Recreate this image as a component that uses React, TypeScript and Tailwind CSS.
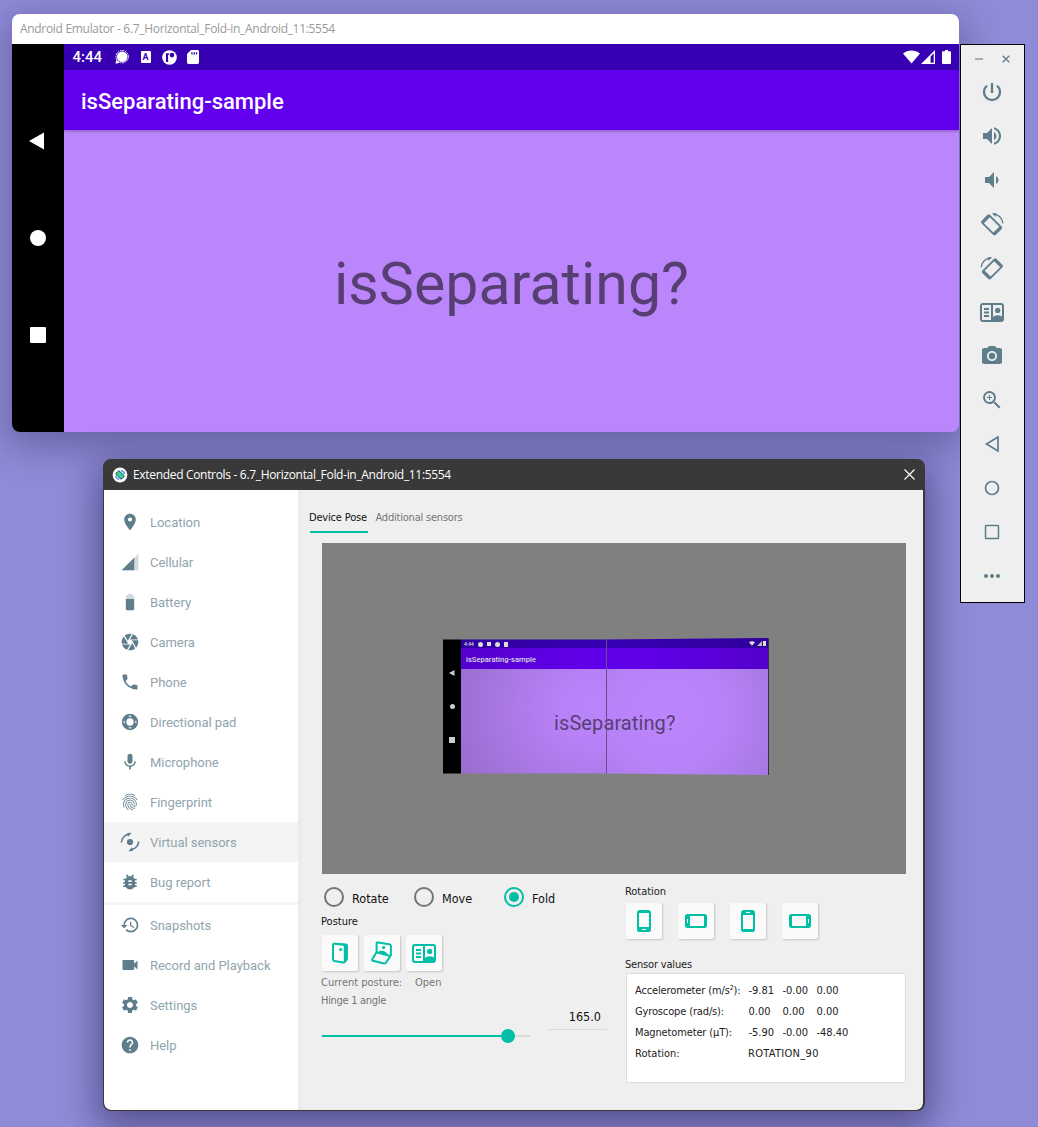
import React from 'react';
import type { ReactNode } from 'react';
import {
  MdLocationOn, MdCamera, MdPhone, MdMic, MdFingerprint, MdBugReport, MdHistory, MdVideocam,
  MdSettings, MdHelp, MdVolumeUp, MdVolumeDown, MdCameraAlt, MdZoomIn, MdMoreHoriz,
} from 'react-icons/md';

function Cellular() {
  return (
    <svg viewBox="0 0 24 24" width="20" height="20" fill="currentColor">
      <path d="M2 22h20V2z" opacity=".3" />
      <path d="M17 7L2 22h15z" />
    </svg>
  );
}

function BatteryIcon() {
  return (
    <svg viewBox="0 0 24 24" width="20" height="20" fill="currentColor">
      <path d="M17 5.33C17 4.6 16.4 4 15.67 4H14V2h-4v2H8.33C7.6 4 7 4.6 7 5.33V9h10z" opacity=".3" />
      <path d="M7 8.5v12.17C7 21.4 7.6 22 8.33 22h7.33c.74 0 1.34-.6 1.34-1.33V8.5z" />
    </svg>
  );
}

function DPad() {
  return (
    <svg viewBox="0 0 24 24" width="20" height="20" fill="currentColor">
      <circle cx="12" cy="12" r="9.8" />
      <circle cx="12" cy="12" r="4.400" fill="#fff" />
      <path d="M12 3.600l1.900 2h-3.800zM12 20.400l1.900-2h-3.800zM3.600 12l2-1.900v3.800zM20.400 12l-2-1.900v3.800z" fill="#fff" />
    </svg>
  );
}

function SensorsIcon() {
  return (
    <svg viewBox="0 0 24 24" width="22" height="22" className="-ml-px" fill="none" stroke="currentColor" strokeWidth="1.9">
      <circle cx="12" cy="12" r="3.4" fill="currentColor" stroke="none" />
      <path d="M2.600 12.600A9.600 9.600 0 0 1 10.500 3.700" />
      <path d="M8.800 2.200l4.900-.2-3.800 4.200z" fill="currentColor" stroke="none" />
      <path d="M21.400 11.400A9.600 9.600 0 0 1 13.500 20.300" />
      <path d="M15.200 21.800l-4.900.2 3.800-4.200z" fill="currentColor" stroke="none" />
    </svg>
  );
}

function Power() {
  return (
    <svg viewBox="0 0 24 24" width="24" height="24" fill="none" stroke="currentColor" strokeWidth="2.300">
      <path d="M12 3v10M7.100 5.700a8 8 0 1 0 9.800 0" />
    </svg>
  );
}

function RotateDevice({ flip }: { flip?: boolean }) {
  return (
    <svg viewBox="0 0 24 24" width="24" height="24" className={flip ? '-scale-x-100' : ''} fill="currentColor">
      <path
        fillRule="evenodd"
        transform="rotate(45 11.600 12.900)"
        d="M3.600 6.900h16q2 0 2 2v8q0 2-2 2h-16q-2 0-2-2v-8q0-2 2-2zM4.900 8.700v8.400h13.400V8.700z"
      />
      <path d="M13 1.900A10.200 10.200 0 0 1 22.900 11.400" fill="none" stroke="currentColor" strokeWidth="1.400" />
      <path d="M11.800 1.200h4.200l-.2 3.800z" />
    </svg>
  );
}

function BookFold() {
  return (
    <svg viewBox="0 0 24 19" width="24" height="19" fill="currentColor">
      <rect x="1" y="1" width="22" height="17" rx="2" fill="none" stroke="currentColor" strokeWidth="2" />
      <path d="M11 1h2v17h-2zM4 5h5v2H4zM4 8.500h5v2H4zM4 12h5v2H4z" />
      <circle cx="17.700" cy="7.400" r="2.600" />
      <path d="M12.500 18v-3.500c2.200-3 8.200-3 10.300 0V18z" />
    </svg>
  );
}

function ClosedFold() {
  return (
    <svg viewBox="0 0 16 22" width="16" height="22" fill="none" stroke="currentColor" strokeWidth="2" strokeLinejoin="round">
      <path d="M1 3.200q0-1.700 1.700-1.500l8.600 1.100q1.500.3 1.500 1.700v14.300q0 1.900-1.700 1.600l-8.600-1.400q-1.500-.3-1.500-1.700z" />
      <path d="M3 .7l11 .8q2 .2 2 2.200v12.800q0 1.200-.8 2l-2.400 2.700V4.200l-2-1.200z" fill="currentColor" stroke="none" />
      <circle cx="8.600" cy="7.600" r="1.500" fill="currentColor" stroke="none" />
    </svg>
  );
}

function HalfFold() {
  return (
    <svg viewBox="0 0 22 24" width="22" height="24" fill="none" stroke="currentColor" strokeWidth="2" strokeLinejoin="round">
      <path d="M5.600 11V2.500q0-1.200 1.300-1l11.300 1.700q1.700.3 1.700 1.800v9.300L14.800 21.900q-.7.900-1.800.6L2 19.800q-1.300-.4-.7-1.500z" />
      <path d="M5.400 11.200L20 15.300" />
      <circle cx="12.600" cy="6.600" r="1.600" fill="currentColor" stroke="none" />
      <path d="M6.500 11.300c2.500-2.800 9-2 11 3.200z" fill="currentColor" stroke="none" />
    </svg>
  );
}

function PhoneShape({ turn }: { turn: string }) {
  return (
    <svg viewBox="0 0 22 22" width="22" height="22" className={turn} fill="currentColor">
      <path
        fillRule="evenodd"
        d="M6.300 0h9.400q2.300 0 2.300 2.500v17q0 2.500-2.300 2.500H6.300q-2.300 0-2.300-2.500v-17Q4 0 6.300 0zM6 3v14h10V3zM9 19v1h4V19z"
      />
    </svg>
  );
}

function Wifi() {
  return (
    <svg viewBox="0 0 17 14" width="17" height="14" fill="#fff">
      <path d="M0 3.600C4.900-.5 12.100-.5 17 3.600L8.500 13.500z" />
    </svg>
  );
}
function Signal() {
  return (
    <svg viewBox="0 0 14 14" width="14" height="14" fill="#fff">
      <path fillRule="evenodd" d="M14 0v14H0zM12.700 3.200L9.600 6.500v6.200h3.100z" />
    </svg>
  );
}
function BatteryFull() {
  return (
    <svg viewBox="0 0 9 14" width="9" height="14" fill="#fff">
      <path d="M3 0h3v1.200h2q1 0 1 1V13q0 1-1 1H1q-1 0-1-1V2.200q0-1 1-1h2z" />
    </svg>
  );
}
function ChatDot() {
  return (
    <svg viewBox="0 0 14 14" width="14" height="14">
      <circle cx="7.200" cy="6.700" r="6.200" fill="none" stroke="#fff" strokeWidth="1" strokeDasharray="1.800 .8" />
      <circle cx="7.200" cy="6.700" r="5.300" fill="#fff" />
      <path d="M.5 13.700l.8-4 3.500 3z" fill="#fff" />
    </svg>
  );
}
function CircleR() {
  return (
    <svg viewBox="0 0 15 15" width="15" height="15">
      <circle cx="7.500" cy="7.500" r="7.300" fill="#fff" />
      <path d="M4 3.200h3v1.500h-.9v7.400H4z" fill="#3700b3" />
      <circle cx="9.900" cy="5.100" r="2.300" fill="#3700b3" />
    </svg>
  );
}
function SdCard() {
  return (
    <svg viewBox="0 0 12 14" width="12" height="14">
      <path d="M4 0h6.500Q12 0 12 1.400v11.200q0 1.400-1.500 1.400h-9Q0 14 0 12.600V4z" fill="#fff" />
      <path d="M4.300 2.200h1.300v2.200H4.300zM6.600 2.200h1.300v2.200H6.600zM8.900 2.200h1.300v2.200H8.900z" fill="#3700b3" />
    </svg>
  );
}

function EmulatorWindow() {
  return (
    <section className="absolute left-3 top-3.5 flex h-[418px] w-[947px] flex-col overflow-hidden rounded-lg shadow-[0_10px_36px_4px_rgba(20,15,50,0.32)]">
      <header className="flex h-[30px] items-center bg-white pl-2 font-['Open_Sans',sans-serif] text-[12px] tracking-[-0.31px] text-[#999]">
        <span>Android Emulator - 6.7_Horizontal_Fold-in_Android_11:5554</span>
      </header>
      <div className="flex flex-1">
        <nav className="flex w-[52px] flex-col items-center justify-center bg-black">
          <span className="flex h-[97px] items-center">
            <svg viewBox="0 0 18 18" width="18" height="18" fill="#fff"><path d="M15 0.500v17L0 9z" /></svg>
          </span>
          <span className="flex h-[97px] items-center"><i className="size-[15.500px] rounded-full bg-white" /></span>
          <span className="flex h-[97px] items-center"><i className="size-4 rounded-[1px] bg-white" /></span>
        </nav>
        <div className="flex flex-1 flex-col font-['Roboto',sans-serif]">
          <div className="flex h-[26px] items-center bg-[#3700b3] pl-[8.500px] pr-2 text-[15px] font-medium text-white">
            <span className="w-[42px] pt-px">4:44</span>
            <ChatDot />
            <span className="ml-3 flex h-3 w-2.5 items-center justify-center rounded-[1px] bg-white text-[9px] font-bold leading-none text-[#3700b3]">A</span>
            <span className="ml-[11px]"><CircleR /></span>
            <span className="ml-[10.500px]"><SdCard /></span>
            <span className="ml-auto flex items-center">
              <Wifi />
              <span className="ml-px"><Signal /></span>
              <span className="ml-[7px]"><BatteryFull /></span>
            </span>
          </div>
          <div className="z-10 flex h-[60px] items-center bg-[#6200ee] pl-[17px] pt-[2px] text-[22px] font-medium text-white shadow-[0_1px_3px_rgba(0,0,0,0.3)]">
            isSeparating-sample
          </div>
          <div className="flex flex-1 items-center justify-center bg-[#bb86fc] pt-[5px] text-[59px] leading-none tracking-[0.040px] text-[#573f74]">
            isSeparating?
          </div>
        </div>
      </div>
    </section>
  );
}

function Toolbar() {
  const tools: ReactNode[] = [
    <Power />,
    <MdVolumeUp size={24} />,
    <MdVolumeDown size={24} />,
    <RotateDevice />,
    <RotateDevice flip />,
    <BookFold />,
    <MdCameraAlt size={24} />,
    <MdZoomIn size={24} />,
    <svg viewBox="0 0 24 24" width="24" height="24" fill="none" stroke="currentColor" strokeWidth="1.700"><path d="M18 5v14L6.500 12z" /></svg>,
    <svg viewBox="0 0 24 24" width="24" height="24" fill="none" stroke="currentColor" strokeWidth="1.700"><circle cx="12" cy="12" r="6.500" /></svg>,
    <svg viewBox="0 0 24 24" width="24" height="24" fill="none" stroke="currentColor" strokeWidth="1.500"><rect x="5.500" y="5.500" width="13" height="13" rx=".8" /></svg>,
    <MdMoreHoriz size={24} />,
  ];
  return (
    <aside className="absolute left-[960px] top-11 h-[559px] w-[65px] border border-black bg-[#efefef] text-[#607d8b]">
      <div className="flex h-[25px] items-center gap-[19px] pl-[14px] pt-0.5">
        <i className="h-0.5 w-2 bg-[#9fb0b8]" />
        <svg viewBox="0 0 8 8" width="8" height="8" stroke="currentColor" strokeWidth="1.300"><path d="M.7.7l6.600 6.600M7.300.7L.7 7.300" /></svg>
      </div>
      <div className="flex flex-col">
        {tools.map((t, i) => <span key={i} className="flex h-11 w-[62px] items-center justify-center">{t}</span>)}
      </div>
    </aside>
  );
}

function Sidebar() {
  const top: [string, ReactNode][] = [
    ['Location', <MdLocationOn size={20} />],
    ['Cellular', <Cellular />],
    ['Battery', <BatteryIcon />],
    ['Camera', <MdCamera size={20} />],
    ['Phone', <MdPhone size={20} />],
    ['Directional pad', <DPad />],
    ['Microphone', <MdMic size={20} />],
    ['Fingerprint', <MdFingerprint size={20} />],
    ['Virtual sensors', <SensorsIcon />],
    ['Bug report', <MdBugReport size={20} />],
  ];
  const bottom: [string, ReactNode][] = [
    ['Snapshots', <MdHistory size={20} />],
    ['Record and Playback', <MdVideocam size={20} />],
    ['Settings', <MdSettings size={20} />],
    ['Help', <MdHelp size={20} />],
  ];
  const item = ([label, icon]: [string, ReactNode]) => (
    <li key={label} className={`flex h-10 items-center pl-4 text-[#607d8b] ${label === 'Virtual sensors' ? 'bg-[#f4f4f4]' : ''}`}>
      <span className="flex w-[30px]">{icon}</span>
      <span className="pt-px text-[13px] tracking-[-0.03px] text-[#90a4ae]">{label}</span>
    </li>
  );
  return (
    <nav className="w-[194px] bg-white pt-3 font-['Roboto',sans-serif]">
      <ul>{top.map(item)}</ul>
      <div className="h-[3px] bg-[#f4f4f4]" />
      <ul>{bottom.map(item)}</ul>
    </nav>
  );
}

function PosePreview() {
  return (
    <div className="relative flex h-[138px] w-[326px] font-['Roboto',sans-serif] [clip-path:polygon(0_2.500px,50%_2.500px,100%_1px,100%_138px,50%_136.500px,0_136.500px)]">
      <div className="flex w-[18px] flex-col items-center bg-black pb-[1px] pt-[19px] text-[#ccc]">
        <span className="flex h-[33.500px] items-center"><svg viewBox="0 0 6 6" width="6" height="6" fill="currentColor"><path d="M5.500 0v6L0 3z" /></svg></span>
        <span className="flex h-[33.500px] items-center"><i className="size-[5px] rounded-full bg-[#ccc]" /></span>
        <span className="flex h-[33.500px] items-center"><i className="size-[6px] bg-[#ccc]" /></span>
      </div>
      <div className="flex flex-1 flex-col">
        <div className="flex h-[11px] items-center bg-[linear-gradient(90deg,#3000a0,#3700b3_50%,#30009c)] pl-[3px] pr-[3px] pt-[3px] text-[5px] font-medium leading-none text-[#ddd]">
          <span className="w-[14px]">4:44</span>
          <span className="flex items-center gap-1">
            <i className="size-[5px] rounded-full bg-[#ddd]" />
            <i className="size-1 bg-[#ddd]" />
            <i className="size-[5px] rounded-full bg-[#ddd]" />
            <i className="h-[5px] w-1 bg-[#ddd]" />
          </span>
          <span className="ml-auto flex -translate-y-px items-center gap-[1.500px]">
            <svg viewBox="0 0 17 14" width="6" height="5" fill="#ddd"><path d="M0 3.600C4.900-.5 12.100-.5 17 3.600L8.500 13.500z" /></svg>
            <svg viewBox="0 0 14 14" width="5" height="5" fill="#bbb"><path d="M14 0v14H0z" /></svg>
            <i className="h-[5px] w-[3px] bg-[#ddd]" />
          </span>
        </div>
        <div className="flex h-[21px] items-center bg-[linear-gradient(90deg,#5500ce,#6000e8_40%,#6000e8_60%,#5400cc)] pl-[5px] pt-[2px] text-[7.600px] font-medium text-[#ddd]">isSeparating-sample</div>
        <div className="flex flex-1">
          <div className="w-[145px] bg-[radial-gradient(ellipse_165px_150px_at_92%_38%,#ba85fb_0%,#b780f6_25%,#946bc7_100%)]" />
          <div className="flex-1 bg-[radial-gradient(ellipse_180px_170px_at_38%_42%,#bb86fc_0%,#b883f9_30%,#956cc9_100%)]" />
        </div>
      </div>
      <span className="absolute left-[111px] top-[74px] text-[20px] leading-6 tracking-[0.1px] text-[#573f74]">isSeparating?</span>
      <i className="absolute left-[163px] top-0 h-full w-px bg-[#6a4a92]" />
      <i className="absolute right-0 top-0 h-full w-px bg-[#3c2c50]" />
    </div>
  );
}

function Radio({ label, on }: { label: string; on?: boolean }) {
  return (
    <label className="flex w-[90px] items-center gap-2 text-[12.500px] text-[#111]">
      <span className={`flex size-5 items-center justify-center rounded-full border-2 ${on ? 'border-[#00bfa5]' : 'border-[#757575]'}`}>
        {on && <i className="size-2.5 rounded-full bg-[#00bfa5]" />}
      </span>
      <span className="pt-[3px]">{label}</span>
    </label>
  );
}

function Tile({ children }: { children: ReactNode }) {
  return (
    <button className="flex size-9 items-center justify-center rounded-[2px] bg-[#fafafa] text-[#00bfa5] shadow-[1px_1px_2px_rgba(0,0,0,0.18)]">
      {children}
    </button>
  );
}

function Readings() {
  const rows: [ReactNode, string[]][] = [
    [<>Accelerometer (m/s<sup className="text-[7px] leading-none">2</sup>):</>, ['-9.81', '-0.00', '0.00']],
    ['Gyroscope (rad/s):', ['0.00', '0.00', '0.00']],
    ['Magnetometer (µT):', ['-5.90', '-0.00', '-48.40']],
  ];
  return (
    <div className="h-[110px] w-[280px] border border-[#dedede] bg-white pl-2 pt-1.5 text-[#222]">
      {rows.map(([name, values], i) => (
        <div key={i} className="flex h-[21px] items-center">
          <span className="w-[113.500px] tracking-[-0.14px]">{name}</span>
          {values.map((v, j) => <span key={j} className="w-[34px]">{v}</span>)}
        </div>
      ))}
      <div className="flex h-[21px] items-center">
        <span className="w-[113px]">Rotation:</span>
        <span className="tracking-[0.300px]">ROTATION_90</span>
      </div>
    </div>
  );
}

function DevicePose() {
  return (
    <main className="flex-1 border-l-4 border-[#ececec] bg-[#efefef] font-['DejaVu_Sans_Condensed','DejaVu_Sans',sans-serif] text-[11px] leading-[14px]">
      <div className="flex gap-2 pl-2 pt-[21px]">
        <span className="w-[58px] whitespace-nowrap border-b-2 border-[#00bfa5] pb-1.5 tracking-[-0.180px] text-[#111]"><span className="-ml-px">Device Pose</span></span>
        <span className="-ml-[0.500px] tracking-[-0.210px] text-[#757575]">Additional sensors</span>
      </div>
      <div className="ml-5 mt-2.5 flex h-[331px] w-[584px] bg-[#808080] pl-[121px] pt-[94px]">
        <PosePreview />
      </div>
      <div className="ml-5 flex">
        <div className="w-[304px]">
          <div className="flex pl-[2px] pt-[13px]">
            <Radio label="Rotate" />
            <Radio label="Move" />
            <Radio label="Fold" on />
          </div>
          <h3 className="-ml-px mt-2 text-[#111]">Posture</h3>
          <div className="mt-1.5 flex gap-1.5">
            <Tile><ClosedFold /></Tile>
            <Tile><HalfFold /></Tile>
            <Tile><BookFold /></Tile>
          </div>
          <div className="-ml-px mt-[5px] flex text-[#757575]"><span className="w-[94px]">Current posture:</span><span>Open</span></div>
          <div className="-ml-px mt-1 tracking-[-0.3px] text-[#757575]">Hinge 1 angle</div>
          <div className="flex">
            <div className="mt-[21px] flex h-3.5 w-[209px] items-center">
              <i className="h-0.5 w-[179px] bg-[#00bfa5]" />
              <i className="size-3.5 rounded-full bg-[#00bfa5]" />
              <i className="h-0.5 flex-1 bg-[#dcdcdc]" />
            </div>
            <div className="ml-4 mt-px h-[21px] w-[60px] border-b border-[#dcdcdc] pr-1.5 pt-px text-right text-[12.500px] text-[#111]">165.0</div>
          </div>
        </div>
        <div>
          <h3 className="-ml-px mt-[11px] tracking-[-0.050px] text-[#222]">Rotation</h3>
          <div className="mt-1 flex gap-4">
            <Tile><PhoneShape turn="" /></Tile>
            <Tile><PhoneShape turn="rotate-90" /></Tile>
            <Tile><PhoneShape turn="rotate-180" /></Tile>
            <Tile><PhoneShape turn="-rotate-90" /></Tile>
          </div>
          <h3 className="-ml-px mb-px mt-[19px] tracking-[-0.180px] text-[#222]">Sensor values</h3>
          <Readings />
        </div>
      </div>
    </main>
  );
}

function ExtendedControls() {
  return (
    <section className="absolute left-[103px] top-[459px] flex h-[652px] w-[822px] flex-col overflow-hidden rounded-lg border border-r-2 border-[#393939] bg-[#393939] shadow-[0_12px_36px_6px_rgba(15,12,50,0.44)]">
      <header className="flex h-[30px] items-center pl-2 pr-2 font-['Open_Sans',sans-serif] text-[12px] tracking-[-0.320px] text-white">
        <svg viewBox="0 0 16 16" width="16" height="16" className="mr-[5px]">
          <circle cx="8" cy="8" r="7.400" fill="#fff" />
          <path d="M3.500 8.800q.8 3 3.800 3.600M9 3.600q3 .4 3.600 3.400" stroke="#4285f4" fill="none" strokeWidth="1.200" />
          <rect x="4" y="5.600" width="8" height="4.800" rx="1.200" transform="rotate(45 8 8)" fill="#37d09b" stroke="#073042" strokeWidth=".8" />
        </svg>
        <span>Extended Controls - 6.7_Horizontal_Fold-in_Android_11:5554</span>
        <svg viewBox="0 0 11 11" width="11" height="11" className="-mt-0.5 ml-auto" stroke="#fff" strokeWidth="1.200"><path d="M.5.500l10 10M10.500.500l-10 10" /></svg>
      </header>
      <div className="flex flex-1 overflow-hidden rounded-b-[7px]">
        <Sidebar />
        <DevicePose />
      </div>
    </section>
  );
}

export default function App() {
  return (
    <div className="relative h-[1127px] w-[1038px] overflow-hidden bg-[#8f8bd8]">
      <EmulatorWindow />
      <ExtendedControls />
      <Toolbar />
    </div>
  );
}
